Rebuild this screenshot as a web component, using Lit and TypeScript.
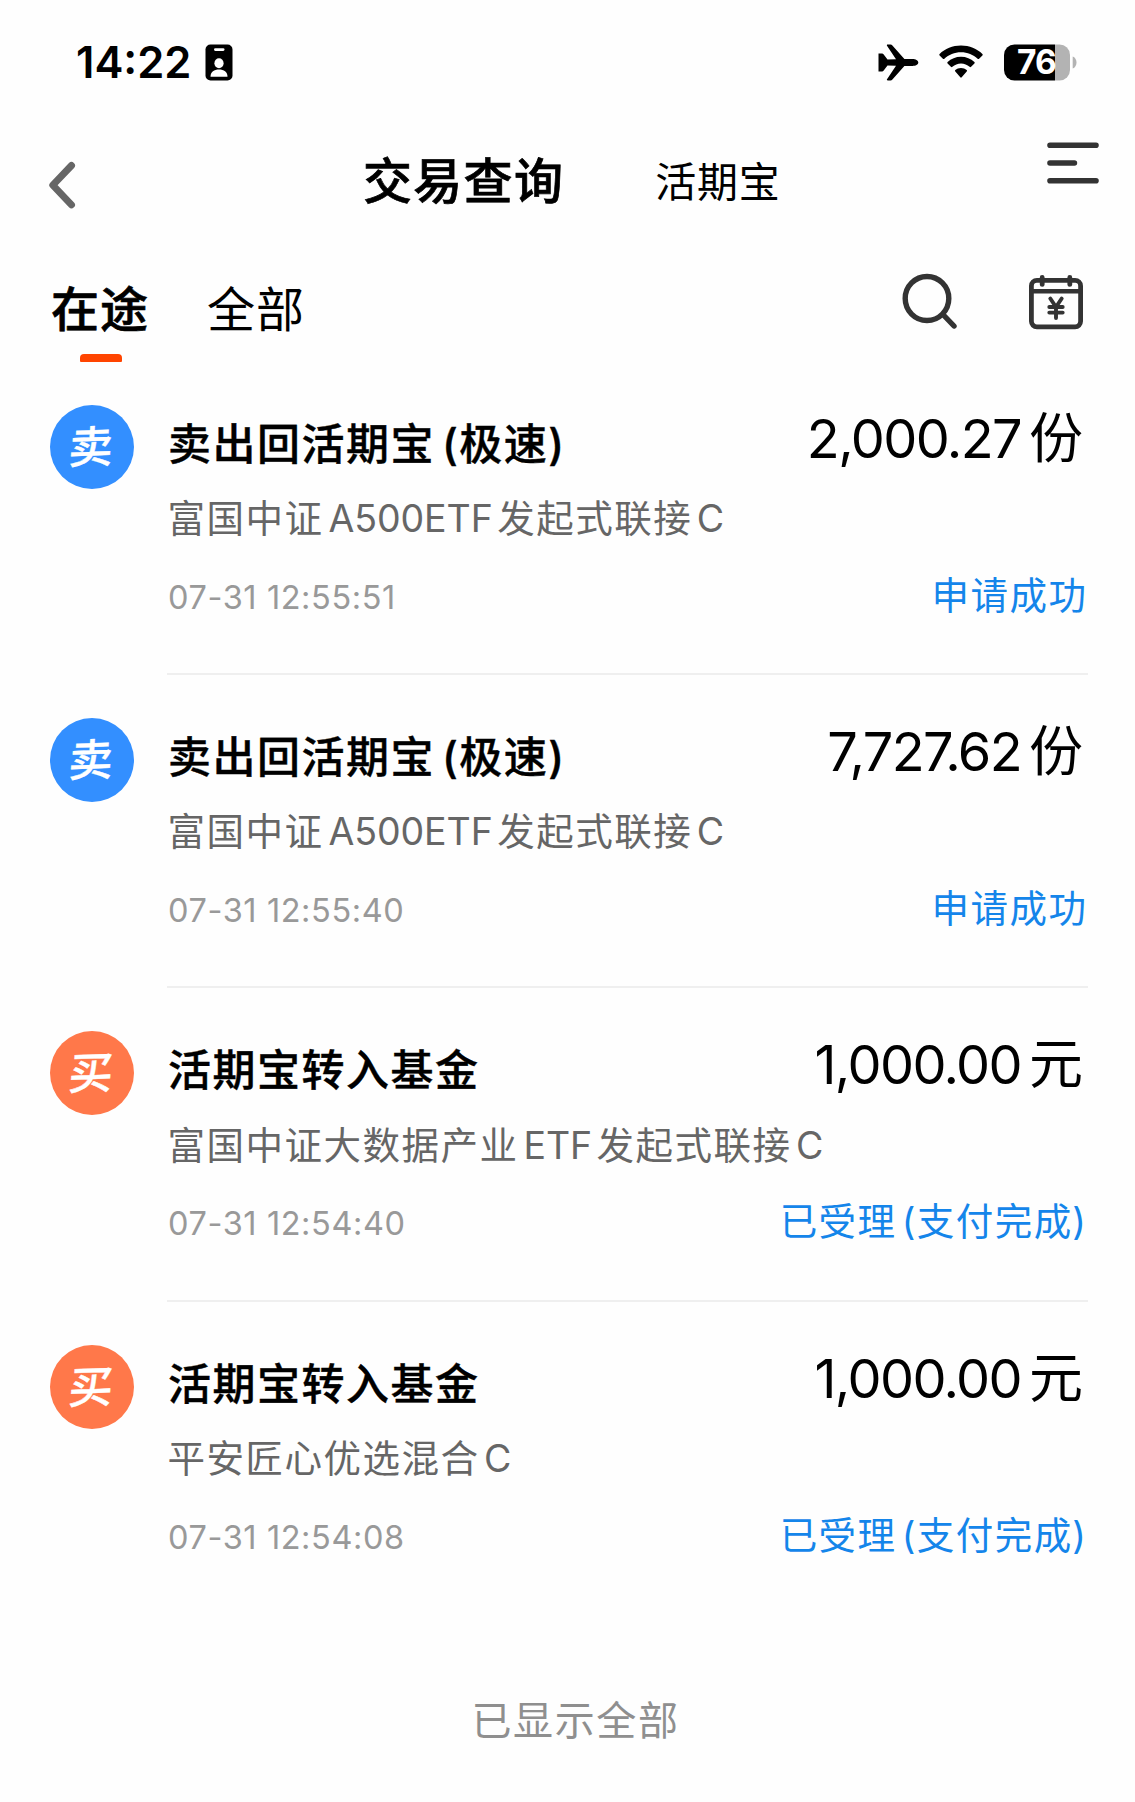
import { LitElement, html, css, svg } from "lit";
import { customElement, property } from "lit/decorators.js";

interface Trade {
  kind: "sell" | "buy";
  title: string;
  fund: string;
  time: string;
  amount: string;
  unit: string;
  status: string;
}

const TRADES: Trade[] = [
  { kind: "sell", title: "卖出回活期宝(极速)", fund: "富国中证A500ETF发起式联接C", time: "07-31 12:55:51", amount: "2,000.27", unit: "份", status: "申请成功" },
  { kind: "sell", title: "卖出回活期宝(极速)", fund: "富国中证A500ETF发起式联接C", time: "07-31 12:55:40", amount: "7,727.62", unit: "份", status: "申请成功" },
  { kind: "buy", title: "活期宝转入基金", fund: "富国中证大数据产业ETF发起式联接C", time: "07-31 12:54:40", amount: "1,000.00", unit: "元", status: "已受理(支付完成)" },
  { kind: "buy", title: "活期宝转入基金", fund: "平安匠心优选混合C", time: "07-31 12:54:08", amount: "1,000.00", unit: "元", status: "已受理(支付完成)" },
];

/* Splits mixed text so Latin runs and Chinese runs can be spaced separately. */
const runs = (text: string) =>
  (text.match(/[\x20-\x7e]+|[^\x20-\x7e]+/g) ?? []).map((part) => {
    const kind = part.startsWith("(") ? "open" : /[\x20-\x7e]/.test(part[0]) ? "latin" : "han";
    return html`<span class=${kind}>${part}</span>`;
  });

@customElement("trade-row")
export class TradeRow extends LitElement {
  @property({ attribute: false }) trade!: Trade;

  static styles = css`
    :host { display: block; }
    .row { display: flex; box-sizing: border-box; height: 313.3px; padding: 43px 47.5px 0 50px; }
    .badge {
      flex: none; width: 84px; height: 84px; margin-right: 33px; border-radius: 50%;
      display: flex; align-items: center; justify-content: center;
      color: #fff; font-size: 44px; font-weight: 500; line-height: 84px;
    }
    .badge span { transform: translateX(-1px) skewX(-6deg) rotate(-2deg); -webkit-text-stroke: 0.4px #fff; }
    .sell { background: #338fff; }
    .buy { background: #ff784a; }
    .body {
      flex: 1; display: grid; grid-template-columns: auto auto; justify-content: space-between;
      grid-template-rows: 70px 50px 53px; row-gap: 0; align-content: start;
      box-sizing: border-box; height: 270.3px; padding-top: 4px;
      border-bottom: 2px solid #efefef; white-space: nowrap;
    }
    .last .body { border-bottom-color: transparent; }
    .title { padding-left: 1px; font-size: 43px; font-weight: 500; line-height: 70px; letter-spacing: 1.5px; color: #000; -webkit-text-stroke: 0.4px #000; }
    .amount { font-size: 54px; line-height: 60px; color: #000; text-align: right; padding-right: 4.5px; letter-spacing: -1.6px; }
    .unit { margin-left: 8px; letter-spacing: 0; }
    .fund { grid-column: 1 / 3; padding-left: 0.5px; margin-top: 15.5px; font-size: 37.5px; line-height: 50px; letter-spacing: 1.5px; color: #666; }
    .time { padding-left: 1px; margin-top: 44px; font-size: 32.5px; line-height: 50px; letter-spacing: 0.6px; color: #999; }
    .status { margin-top: 42px; font-size: 37.5px; line-height: 50px; letter-spacing: 1.5px; color: #1485ea; text-align: right; }
    .open { margin-left: 7px; }
    .status .open { margin-left: 5px; }
    .status .latin { margin-left: -0.5px; }
    .fund .latin { margin-left: 5px; margin-right: 4.5px; letter-spacing: -0.1px; }
    .fund .latin:last-child { margin-left: 4.5px; }
  `;

  render() {
    const t = this.trade;
    return html`
      <div class="row ${t === TRADES[TRADES.length - 1] ? "last" : ""}">
        <div class="badge ${t.kind}"><span>${t.kind === "sell" ? "卖" : "买"}</span></div>
        <div class="body">
          <div class="title">${runs(t.title)}</div>
          <div class="amount">${t.amount}<span class="unit">${t.unit}</span></div>
          <div class="fund">${runs(t.fund)}</div>
          <div class="time">${t.time}</div>
          <div class="status">${runs(t.status)}</div>
        </div>
      </div>`;
  }
}

const badgeIcon = svg`
  <rect x="0.5" y="0.5" width="27" height="36" rx="5" fill="#000"/>
  <rect x="9" y="4.3" width="10.5" height="2.6" rx="1.3" fill="#fff"/>
  <ellipse cx="14" cy="19.3" rx="4.6" ry="5" fill="#fff"/>
  <path d="M5.5 32.8c0-5 3.700-7.300 8.500-7.300s8.500 2.300 8.500 7.300z" fill="#fff"/>`;

@customElement("app-root")
export class AppRoot extends LitElement {
  static styles = css`
    :host {
      display: block; width: 1135px; height: 1802px; overflow: hidden; background: #fefefe; color: #000;
      font-family: Inter, "Noto Sans CJK SC", sans-serif;
    }
    svg { display: block; flex: none; overflow: visible; }
    .statusbar { display: flex; align-items: center; height: 124px; box-sizing: border-box; padding: 0 58px 0 76px; }
    .clock { width: 129px; font-size: 43.5px; font-weight: 600; line-height: 60px; white-space: nowrap; }
    .signals { margin-left: auto; display: flex; align-items: center; }
    .plane { margin-right: 20px; }
    .wifi { margin-right: 20px; }
    .charge { font-size: 33.5px; font-weight: 700; letter-spacing: -0.8px; }
    .nav { display: flex; height: 120px; }
    .back { margin: 37px 0 0 48px; }
    .heading { margin: 23px 0 0 285px; font-size: 49px; font-weight: 500; line-height: 70px; letter-spacing: 1.3px; white-space: nowrap; -webkit-text-stroke: 0.7px #000; }
    .sibling { margin: 22px 0 0 91px; font-size: 41px; line-height: 72px; letter-spacing: 0.8px; white-space: nowrap; }
    .menu { margin: 18px 35.500px 0 auto; }
    .tabs { display: flex; height: 117.7px; }
    .tab { font-size: 48px; line-height: 70px; letter-spacing: 1px; margin-top: 30.500px; white-space: nowrap; }
    .active { margin-left: 51px; width: 98px; font-weight: 500; display: flex; flex-direction: column; align-items: center; -webkit-text-stroke: 0.7px #000; }
    .active::after { content: ""; width: 42px; height: 7.5px; margin-top: 9.5px; margin-left: 1px; border-radius: 4px 4px 1px 1px; background: #ff4400; }
    .all { margin-left: 58px; }
    .search { margin: 28px 0 0 auto; }
    .calendar { margin: 29px 51.500px 0 68.500px; }
    .footer { margin-top: 76px; text-align: center; font-size: 40px; line-height: 60px; letter-spacing: 1.6px; color: #8f8f8f; padding-left: 16px; }
  `;

  render() {
    return html`
      <div class="statusbar">
        <div class="clock">14:22</div>
        <svg width="28" height="37" viewBox="0 0 28 37">${badgeIcon}</svg>
        <div class="signals">
          <svg class="plane" width="41" height="37" viewBox="0 0 41 37">
            <path d="M0.500 9.500h3.500c.8 0 1.300.3 1.700.9l3.800 5.200 8.500-.4L9 1.700C8.600.9 9 .5 9.800.500h2.700c.8 0 1.400.3 1.900.9l12 13.700h8.100c3 0 5.800 1.300 5.800 3.400s-2.800 3.400-5.800 3.400h-8.100l-12 13.700c-.5.6-1.100.9-1.900.9H9.800c-.8 0-1.200-.5-.8-1.200l9-13.500-8.500-.4-3.800 5.200c-.4.6-.9.9-1.700.9H.5V9.500z"/>
          </svg>
          <svg class="wifi" width="44" height="34" viewBox="0 0 44 34">
            <path d="M22 .5C13.600.5 6 3.700.6 8.900c-.5.5-.5 1 0 1.500l3.300 3.300c.4.400 1 .4 1.500 0C9.700 9.700 15.500 7.200 22 7.200s12.300 2.500 16.600 6.500c.5.4 1.100.4 1.500 0l3.300-3.300c.5-.5.5-1 0-1.500C38 3.700 30.400.5 22 .5z"/>
            <path d="M22 11.800c-5.200 0-9.900 2-13.400 5.200-.5.5-.5 1.100 0 1.600l3.300 3.200c.5.5 1 .4 1.500 0 2.300-2 5.300-3.300 8.600-3.300s6.300 1.300 8.600 3.300c.5.400 1 .5 1.500 0l3.300-3.200c.5-.5.500-1.100 0-1.600-3.500-3.200-8.200-5.200-13.400-5.200z"/>
            <path d="M22 23c-2.200 0-4.200.8-5.700 2.100-.5.5-.5 1 0 1.500l5 5.700c.4.500 1 .5 1.400 0l5-5.700c.5-.5.5-1 0-1.500C26.200 23.800 24.200 23 22 23z"/>
          </svg>
          <svg width="74" height="37" viewBox="0 0 74 37">
            <defs><clipPath id="shell"><rect x="1" y="0.500" width="66" height="36" rx="10.500"/></clipPath></defs>
            <g clip-path="url(#shell)">
              <rect width="52" height="37" fill="#000"/>
              <rect x="52" width="16" height="37" fill="#b3b3b3"/>
            </g>
            <path d="M69.700 12.500c2.300.8 3.800 3 3.800 6s-1.500 5.200-3.800 6z" fill="#b3b3b3"/>
            <text class="charge" x="33.500" y="30.300" text-anchor="middle" fill="#fff">76</text>
          </svg>
        </div>
      </div>

      <div class="nav">
        <svg class="back" width="30" height="50" viewBox="0 0 30 50">
          <path d="M23.500 4.500 4.800 24.200 23.500 43.800" fill="none" stroke="#666" stroke-width="7" stroke-linecap="round" stroke-linejoin="round"/>
        </svg>
        <div class="heading">交易查询</div>
        <div class="sibling">活期宝</div>
        <svg class="menu" width="54" height="44" viewBox="0 0 54 44">
          <path d="M4 3.300h46M4 21h24.400M4 38.800h46" stroke="#333" stroke-width="5.600" stroke-linecap="round"/>
        </svg>
      </div>

      <div class="tabs">
        <div class="tab active">在途</div>
        <div class="tab all">全部</div>
        <svg class="search" width="58" height="60" viewBox="0 0 58 60">
          <ellipse cx="26" cy="26.500" rx="21.800" ry="22" fill="none" stroke="#333" stroke-width="5.400"/>
          <path d="M42 42.500 53 54" stroke="#333" stroke-width="5.400" stroke-linecap="round"/>
        </svg>
        <svg class="calendar" width="56" height="58" viewBox="0 0 56 58">
          <g fill="none" stroke="#333" stroke-width="4.800" stroke-linecap="round">
            <rect x="3.400" y="7.400" width="49.200" height="46.400" rx="5.500"/>
            <path d="M3.400 18.200h49.200" stroke-width="4.400"/>
            <path d="M14.200 4.400v7M41.800 4.400v7"/>
            <path d="M22.300 25.500 28 34l5.700-8.500M28 34v11M21.300 34h13.400M21.300 39.600h13.400" stroke-width="3.900"/>
          </g>
        </svg>
      </div>

      ${TRADES.map((t) => html`<trade-row .trade=${t}></trade-row>`)}
      <div class="footer">已显示全部</div>
    `;
  }
}
